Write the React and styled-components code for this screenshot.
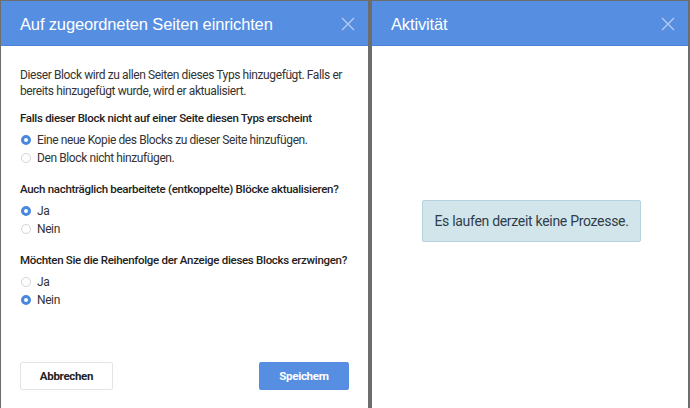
import React from 'react';
import styled, { createGlobalStyle } from 'styled-components';

const Global = createGlobalStyle`
  html, body { margin: 0; padding: 0; background: #6d6d6d; }
  body { font-family: Roboto, "Liberation Sans", Arial, sans-serif; color: #333; }
`;

const Desk = styled.div`
  display: flex;
  gap: 4px;
  height: 408px;
  padding: 1px 2px 0 1px;
  box-sizing: border-box;
  background: #6d6d6d;
`;

const Panel = styled.section`
  width: ${p => p.$width}px;
  flex: none;
  background: #fff;
  display: flex;
  flex-direction: column;
`;

const Header = styled.header`
  height: 45px;
  box-sizing: border-box;
  background: #568ee2;
  border-bottom: 1px solid #4a82d6;
  display: flex;
  align-items: center;
  justify-content: space-between;
  padding: 2px 12px 0 ${p => p.$indent}px;
  flex: none;
`;

const Title = styled.h1`
  margin: 0;
  font-family: "Liberation Sans", Arial, sans-serif;
  font-size: 16.5px;
  letter-spacing: -0.15px;
  font-weight: normal;
  color: #fff;
`;

const Close = styled.button`
  border: none;
  background: none;
  padding: 0;
  width: 16px;
  height: 16px;
  display: flex;
  cursor: pointer;
`;

const Body = styled.div`
  flex: 1;
  display: flex;
  flex-direction: column;
  padding: 21px 12px 18px 19px;
  font-size: 12px;
  line-height: 16px;
  letter-spacing: -0.4px;
`;

const Intro = styled.p`
  margin: 0 0 11px;
`;

const Group = styled.div`
  margin-bottom: 14px;
`;

const Question = styled.div`
  font-size: 11.5px;
  font-weight: 500;
  letter-spacing: -0.3px;
  white-space: nowrap;
  color: #222;
  margin-bottom: 5px;
`;

const Option = styled.label`
  display: flex;
  align-items: center;
  gap: 6px;
  height: 18px;
`;

const Radio = styled.span`
  width: 10px;
  height: 10px;
  border-radius: 50%;
  box-sizing: border-box;
  margin-left: 1px;
  border: ${p => (p.$on ? '3px solid #4a88e0' : '1px solid #d4d4d4')};
  background: #fff;
`;

const Actions = styled.div`
  margin-top: auto;
  display: flex;
  justify-content: space-between;
  padding-right: 7px;
`;

const Button = styled.button`
  height: 28px;
  width: ${p => p.$w}px;
  border-radius: 2px;
  font-family: inherit;
  font-size: 11.5px;
  letter-spacing: -0.3px;
  font-weight: bold;
  border: 1px solid ${p => (p.$primary ? '#568ee2' : '#e4e4e4')};
  background: ${p => (p.$primary ? '#568ee2' : '#fff')};
  color: ${p => (p.$primary ? '#fff' : '#222')};
`;

const Center = styled.div`
  flex: 1;
  display: flex;
  align-items: flex-start;
  justify-content: center;
  padding-top: 154px;
  padding-left: 3px;
`;

const Notice = styled.div`
  background: #d2e5ea;
  border: 1px solid #b5d3de;
  border-radius: 2px;
  color: #2f3d4a;
  font-size: 14px;
  letter-spacing: -0.3px;
  padding: 12px 11px;
`;

const X = () => (
  <svg width="16" height="16" viewBox="0 0 16 16">
    <path d="M2 2L14 14M14 2L2 14" stroke="#b6cdf2" strokeWidth="1.3" />
  </svg>
);

const RadioRow = ({ on, children }) => (
  <Option>
    <Radio $on={on} />
    {children}
  </Option>
);

export default function App() {
  return (
    <>
      <Global />
      <Desk>
        <Panel $width={367}>
          <Header $indent={19}>
            <Title>Auf zugeordneten Seiten einrichten</Title>
            <Close><X /></Close>
          </Header>
          <Body>
            <Intro>
              Dieser Block wird zu allen Seiten dieses Typs hinzugefügt. Falls er
              bereits hinzugefügt wurde, wird er aktualisiert.
            </Intro>
            <Group>
              <Question>Falls dieser Block nicht auf einer Seite diesen Typs erscheint</Question>
              <RadioRow on>Eine neue Kopie des Blocks zu dieser Seite hinzufügen.</RadioRow>
              <RadioRow>Den Block nicht hinzufügen.</RadioRow>
            </Group>
            <Group>
              <Question>Auch nachträglich bearbeitete (entkoppelte) Blöcke aktualisieren?</Question>
              <RadioRow on>Ja</RadioRow>
              <RadioRow>Nein</RadioRow>
            </Group>
            <Group>
              <Question>Möchten Sie die Reihenfolge der Anzeige dieses Blocks erzwingen?</Question>
              <RadioRow>Ja</RadioRow>
              <RadioRow on>Nein</RadioRow>
            </Group>
            <Actions>
              <Button $w={93}>Abbrechen</Button>
              <Button $w={90} $primary>Speichern</Button>
            </Actions>
          </Body>
        </Panel>
        <Panel $width={316}>
          <Header $indent={19}>
            <Title>Aktivität</Title>
            <Close><X /></Close>
          </Header>
          <Center>
            <Notice>Es laufen derzeit keine Prozesse.</Notice>
          </Center>
        </Panel>
      </Desk>
    </>
  );
}
